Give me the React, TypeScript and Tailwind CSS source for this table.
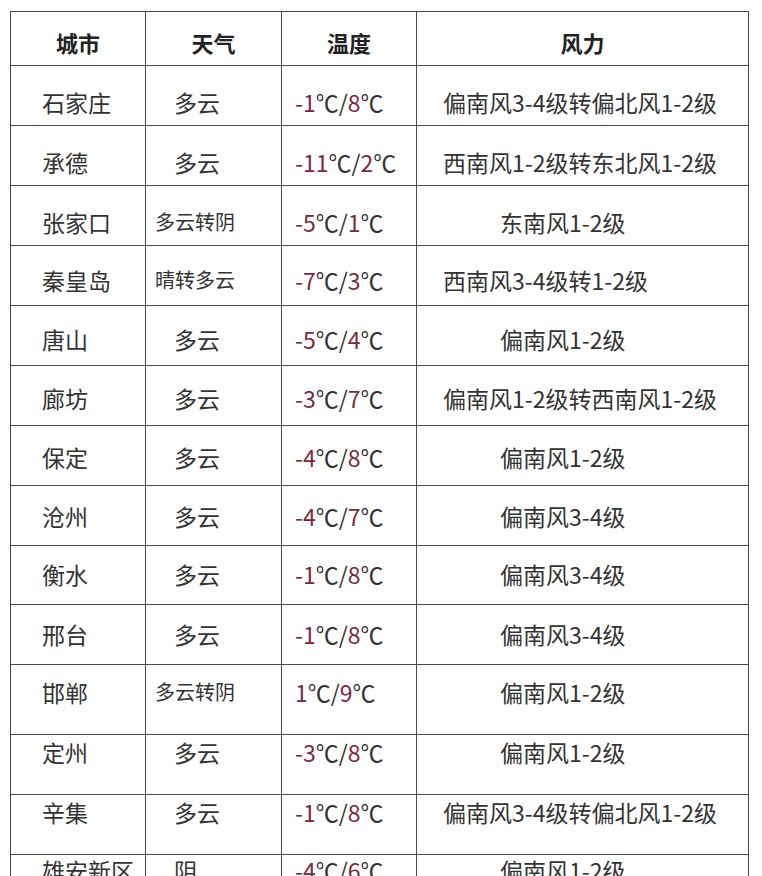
import React from "react";

type Row = {
  city: string;
  weather: string;
  small?: boolean;
  low: string;
  high: string;
  wind: string;
  wide?: boolean;
  h: string;
  pt: string;
};

// pt values follow the text baseline drift of the original scan
const rows: Row[] = [
  { city: "石家庄", weather: "多云", low: "-1", high: "8", wind: "偏南风3-4级转偏北风1-2级", wide: true, h: "h-[60px]", pt: "pt-[25px]" },
  { city: "承德", weather: "多云", low: "-11", high: "2", wind: "西南风1-2级转东北风1-2级", wide: true, h: "h-[60px]", pt: "pt-[25px]" },
  { city: "张家口", weather: "多云转阴", small: true, low: "-5", high: "1", wind: "东南风1-2级", h: "h-[60px]", pt: "pt-[25px]" },
  { city: "秦皇岛", weather: "晴转多云", small: true, low: "-7", high: "3", wind: "西南风3-4级转1-2级", wide: true, h: "h-[60px]", pt: "pt-[23px]" },
  { city: "唐山", weather: "多云", low: "-5", high: "4", wind: "偏南风1-2级", h: "h-[60px]", pt: "pt-[22px]" },
  { city: "廊坊", weather: "多云", low: "-3", high: "7", wind: "偏南风1-2级转西南风1-2级", wide: true, h: "h-[60px]", pt: "pt-[21px]" },
  { city: "保定", weather: "多云", low: "-4", high: "8", wind: "偏南风1-2级", h: "h-[60px]", pt: "pt-[20px]" },
  { city: "沧州", weather: "多云", low: "-4", high: "7", wind: "偏南风3-4级", h: "h-[60px]", pt: "pt-[19px]" },
  { city: "衡水", weather: "多云", low: "-1", high: "8", wind: "偏南风3-4级", h: "h-[59px]", pt: "pt-[17px]" },
  { city: "邢台", weather: "多云", low: "-1", high: "8", wind: "偏南风3-4级", h: "h-[60px]", pt: "pt-[18px]" },
  { city: "邯郸", weather: "多云转阴", small: true, low: "1", high: "9", wind: "偏南风1-2级", h: "h-[70px]", pt: "pt-[16px]" },
  { city: "定州", weather: "多云", low: "-3", high: "8", wind: "偏南风1-2级", h: "h-[60px]", pt: "pt-[6px]" },
  { city: "辛集", weather: "多云", low: "-1", high: "8", wind: "偏南风3-4级转偏北风1-2级", wide: true, h: "h-[60px]", pt: "pt-[6px]" },
  { city: "雄安新区", weather: "阴", low: "-4", high: "6", wind: "偏南风1-2级", h: "h-[60px]", pt: "pt-[4px]" },
];

const cell = "border-r border-b border-[#4a4a4a] leading-[22px]";

export default function App() {
  return (
    <div
      className="h-[876px] overflow-hidden bg-white pl-[10px] pt-[11px] text-[#333] text-[23px]"
      style={{ fontFamily: '"Noto Sans CJK SC", "Noto Sans", sans-serif' }}
    >
      <div className="grid w-[739px] grid-cols-[135px_136px_135px_332px] border-l border-t border-[#4a4a4a]">
        {["城市", "天气", "温度", "风力"].map((t) => (
          <div key={t} className={`${cell} h-[54px] pt-[19px] text-center font-bold text-[22px] text-[#222]`}>
            {t}
          </div>
        ))}

        {rows.map((r) => (
          <React.Fragment key={r.city}>
            <div className={`${cell} ${r.h} ${r.pt} pl-[31px]`}>{r.city}</div>
            <div className={`${cell} ${r.h} ${r.pt} ${r.small ? "pl-[9px] text-[20px]" : "pl-[28px]"}`}>
              {r.weather}
            </div>
            <div className={`${cell} ${r.h} ${r.pt} pl-[13px]`}>
              <span className="text-[#7a2a3a]">{r.low}</span>
              ℃/
              <span className="text-[#7a2a3a]">{r.high}</span>℃
            </div>
            <div className={`${cell} ${r.h} ${r.pt} ${r.wide ? "pl-[26px]" : "pl-[83px]"}`}>{r.wind}</div>
          </React.Fragment>
        ))}
      </div>
    </div>
  );
}
